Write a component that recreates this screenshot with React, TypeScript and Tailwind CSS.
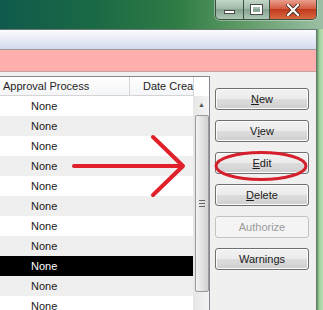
import React from "react";

const rows = Array.from({ length: 11 }, (_, i) => i);

function Btn({
  children,
  disabled,
}: {
  children: React.ReactNode;
  disabled?: boolean;
}) {
  return (
    <div
      className={
        disabled
          ? "flex h-[22px] w-[94px] shrink-0 items-center justify-center rounded-[3px] border border-[#c2c2c2] bg-[#f4f4f4] text-[#9a9a9a]"
          : "flex h-[22px] w-[94px] shrink-0 items-center justify-center rounded-[3px] border border-[#707070] bg-[linear-gradient(#f2f2f2_0%,#ebebeb_50%,#dddddd_50%,#cfcfcf_100%)] text-[#1a1a1a] shadow-[inset_0_0_0_1px_#fcfcfc]"
      }
    >
      {children}
    </div>
  );
}

function WinButtons() {
  return (
    <div className="flex h-[20px] overflow-hidden rounded-b-[5px] border border-t-0 border-[#3d4f45] shadow-[0_0_0_1px_rgba(255,255,255,0.35)]">
      <div className="flex w-[28px] items-center justify-center border-r border-[#3d4f45] bg-[linear-gradient(#c3d6c8,#9db6a5_50%,#86a290_50%,#adc8b5)]">
        <div className="mt-[5px] h-[4px] w-[11px] border border-[#4a4a4a] bg-white" />
      </div>
      <div className="flex w-[26px] items-center justify-center border-r border-[#3d4f45] bg-[linear-gradient(#c3d6c8,#9db6a5_50%,#86a290_50%,#adc8b5)]">
        <div className="h-[9px] w-[11px] border-[2px] border-white shadow-[0_0_0_1px_#4a4a4a]" />
      </div>
      <div className="flex w-[46px] items-center justify-center bg-[linear-gradient(#e8a08e,#d2553a_50%,#c03a1c_50%,#d86a40)]">
        <svg width="14" height="12" viewBox="0 0 14 12">
          <path
            d="M2 1 L12 11 M12 1 L2 11"
            stroke="#4a2a20"
            strokeWidth="4"
            strokeLinecap="square"
          />
          <path
            d="M2 1 L12 11 M12 1 L2 11"
            stroke="#ffffff"
            strokeWidth="2.2"
            strokeLinecap="square"
          />
        </svg>
      </div>
    </div>
  );
}

export default function App() {
  return (
    <div
      className="relative h-[310px] w-[323px] overflow-hidden bg-[linear-gradient(90deg,#0f5a4c_0%,#1b6a45_30%,#2f7c45_55%,#5f9a66_75%,#9bbfa4_100%)] text-[11px] leading-none"
      style={{ fontFamily: '"Liberation Sans", Arial, sans-serif' }}
    >
      {/* title strip */}
      <div className="flex h-[29px] justify-end pr-[6px]">
        <WinButtons />
      </div>

      <div className="flex h-[281px] overflow-hidden">
        {/* client area */}
        <div className="flex w-[317px] shrink-0 flex-col border-t border-r border-[#6b7a70] bg-[#f0f0f0]">
          <div className="h-[20px] shrink-0 border-b border-[#9a9a9a] bg-[linear-gradient(#fbfcfe,#d3daee)]" />
          <div className="h-[22px] shrink-0 border-b border-[#c9a0a0] bg-[#ffaeae]" />
          <div className="h-[4px] shrink-0" />

          <div className="flex shrink-0">
            {/* grid */}
            <div className="flex w-[210px] flex-col border-t border-r border-[#828790] bg-white">
              <div className="flex h-[19px] shrink-0 bg-[linear-gradient(#ffffff,#f3f4f6)]">
                <div className="flex w-[130px] items-center border-r border-b border-[#d5d5d5] pl-[3px] text-[#1e1e1e]">
                  Approval Process
                </div>
                <div className="flex w-[63px] items-center whitespace-nowrap border-b border-[#d5d5d5] pl-[13px] text-[#1e1e1e]">
                  Date Crea
                </div>
                <div className="w-[16px] border-l border-[#d5d5d5] bg-white" />
              </div>
              <div className="flex">
                <div className="flex w-[193px] flex-col">
                  {rows.map((i) => (
                    <div
                      key={i}
                      className={
                        i === 8
                          ? "flex h-[20px] shrink-0 items-center bg-black pl-[31px] text-white"
                          : i % 2 === 1
                            ? "flex h-[20px] shrink-0 items-center bg-[#efefef] pl-[31px] text-[#1a1a1a]"
                            : "flex h-[20px] shrink-0 items-center bg-white pl-[31px] text-[#1a1a1a]"
                      }
                    >
                      None
                    </div>
                  ))}
                </div>
                {/* scrollbar */}
                <div className="flex w-[16px] flex-col items-center bg-[linear-gradient(90deg,#e6e6e6,#f4f4f4)] pl-[1px]">
                  <div className="flex h-[17px] items-center justify-center text-[7px] text-[#555]">
                    ▲
                  </div>
                  <div className="mt-[2px] flex h-[177px] w-[14px] items-center justify-center rounded-[2px] border border-[#9a9a9a] bg-[linear-gradient(90deg,#f2f2f2,#e2e2e2_50%,#d2d2d2)]">
                    <div className="flex flex-col gap-[2px]">
                      <div className="h-[1px] w-[6px] bg-[#666]" />
                      <div className="h-[1px] w-[6px] bg-[#666]" />
                      <div className="h-[1px] w-[6px] bg-[#666]" />
                    </div>
                  </div>
                </div>
              </div>
            </div>

            {/* button panel */}
            <div className="flex flex-1 flex-col gap-[10px] pt-[12px] pl-[5px]">
              <Btn>
                <span className="underline">N</span>ew
              </Btn>
              <Btn>
                V<span className="underline">i</span>ew
              </Btn>
              <Btn>
                <span className="underline">E</span>dit
              </Btn>
              <Btn>
                <span className="underline">D</span>elete
              </Btn>
              <Btn disabled>Authorize</Btn>
              <Btn>Warnings</Btn>
            </div>
          </div>
        </div>
        {/* right frame */}
        <div className="flex-1 bg-[linear-gradient(90deg,#5f8f66,#9fd19c_40%,#b7e0b0)]" />
      </div>

      {/* annotation overlay */}
      <svg
        className="pointer-events-none absolute top-0 left-0"
        width="323"
        height="310"
        viewBox="0 0 323 310"
      >
        <g stroke="#e0202a" strokeWidth="4" strokeLinecap="round" fill="none">
          <path d="M74 166 L182 166" />
          <path d="M153 137 L183 166 L153 195" strokeLinejoin="round" />
        </g>
        <ellipse
          cx="261"
          cy="166"
          rx="45"
          ry="13.5"
          fill="none"
          stroke="#d61f2c"
          strokeWidth="3"
        />
      </svg>
    </div>
  );
}
